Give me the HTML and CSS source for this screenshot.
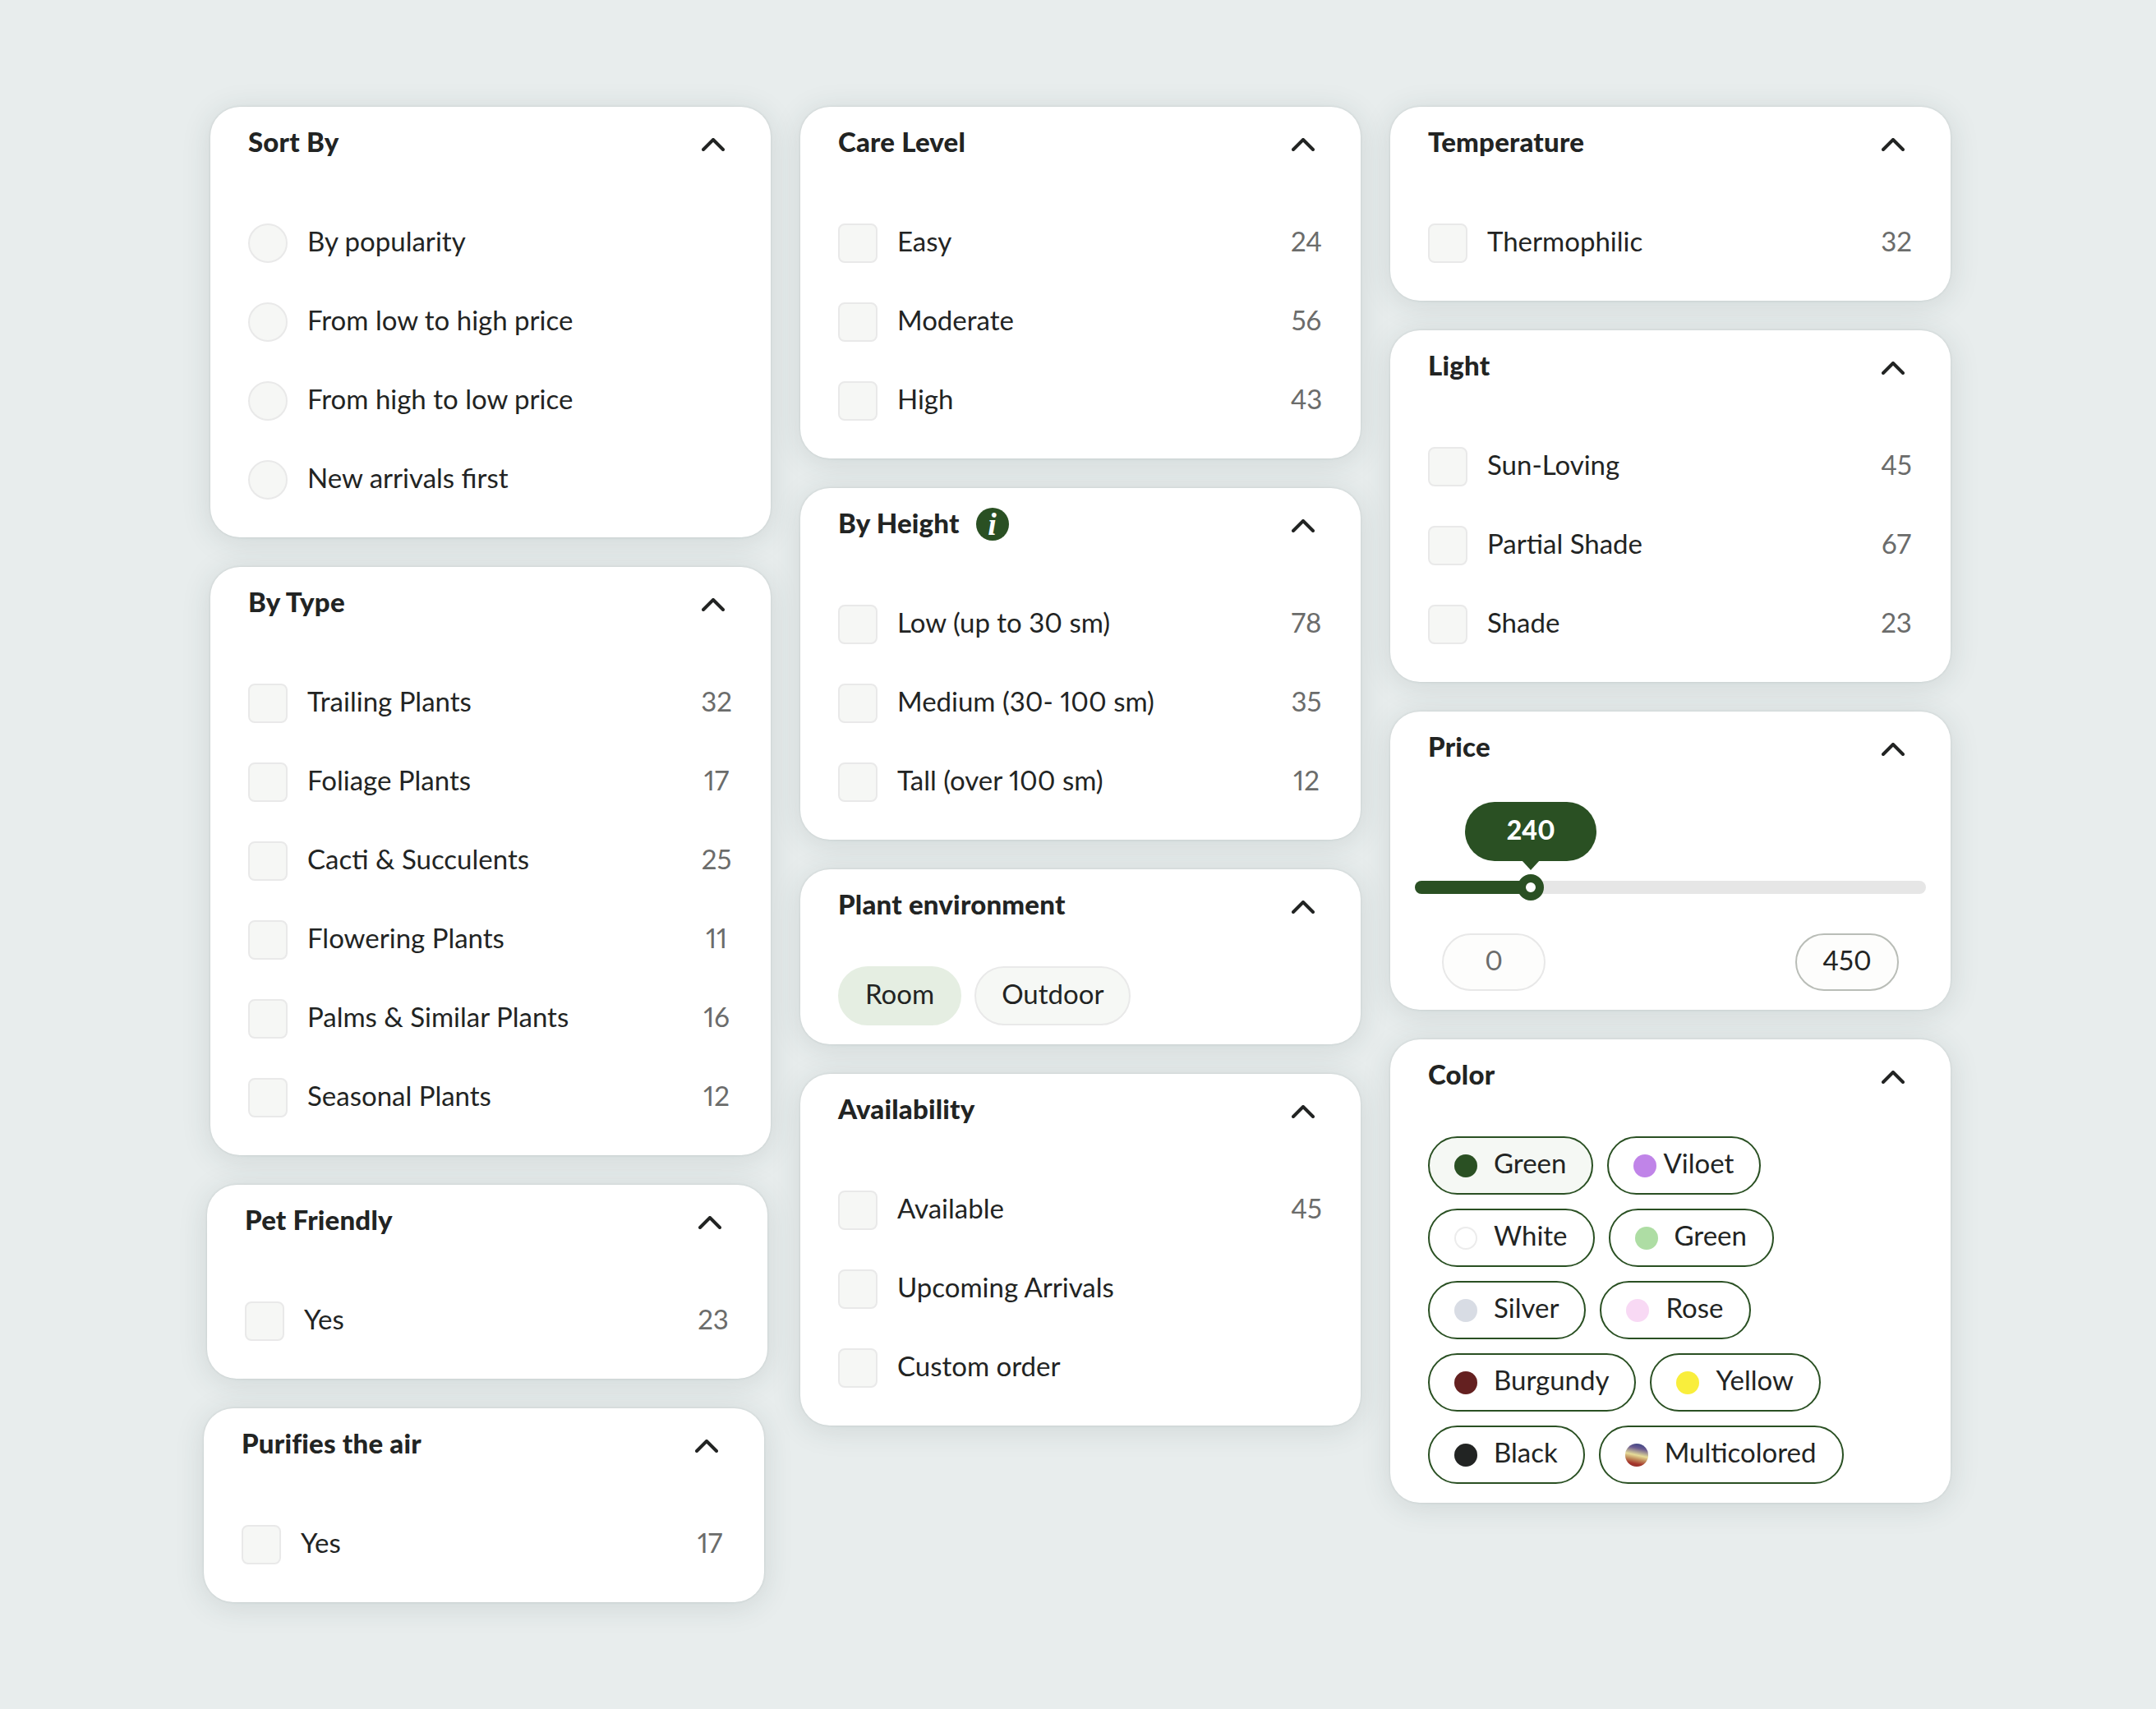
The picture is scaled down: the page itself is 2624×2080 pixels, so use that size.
FILE: index.html
```html
<!DOCTYPE html>
<html lang="en">
<head>
<meta charset="utf-8">
<title>Plant filters</title>
<link rel="stylesheet" href="styles.css">
</head>
<body>
<svg class="defs" width="0" height="0"><symbol id="chev" viewBox="0 0 28 16"><path d="M2 14 14 2l12 12" fill="none" stroke="currentColor" stroke-width="4" stroke-linecap="round" stroke-linejoin="round"/></symbol></svg>
<main class="board">
  <div class="col">
    <section class="card">
      <header class="head"><h2 class="title">Sort By</h2><svg class="chev"><use href="#chev"/></svg></header>
      <ul class="rows">
        <li class="row"><span class="radio"></span><span class="label">By popularity</span></li>
        <li class="row"><span class="radio"></span><span class="label">From low to high price</span></li>
        <li class="row"><span class="radio"></span><span class="label">From high to low price</span></li>
        <li class="row"><span class="radio"></span><span class="label">New arrivals first</span></li>
      </ul>
    </section>
    <section class="card">
      <header class="head"><h2 class="title">By Type</h2><svg class="chev"><use href="#chev"/></svg></header>
      <ul class="rows">
        <li class="row"><span class="box"></span><span class="label">Trailing Plants</span><span class="count">32</span></li>
        <li class="row"><span class="box"></span><span class="label">Foliage Plants</span><span class="count">17</span></li>
        <li class="row"><span class="box"></span><span class="label">Cacti &amp; Succulents</span><span class="count">25</span></li>
        <li class="row"><span class="box"></span><span class="label">Flowering Plants</span><span class="count">11</span></li>
        <li class="row"><span class="box"></span><span class="label">Palms &amp; Similar Plants</span><span class="count">16</span></li>
        <li class="row"><span class="box"></span><span class="label">Seasonal Plants</span><span class="count">12</span></li>
      </ul>
    </section>
    <section class="card shift-1">
      <header class="head"><h2 class="title">Pet Friendly</h2><svg class="chev"><use href="#chev"/></svg></header>
      <ul class="rows">
        <li class="row"><span class="box"></span><span class="label">Yes</span><span class="count">23</span></li>
      </ul>
    </section>
    <section class="card shift-2">
      <header class="head"><h2 class="title">Purifies the air</h2><svg class="chev"><use href="#chev"/></svg></header>
      <ul class="rows">
        <li class="row"><span class="box"></span><span class="label">Yes</span><span class="count">17</span></li>
      </ul>
    </section>
  </div>
  <div class="col">
    <section class="card">
      <header class="head"><h2 class="title">Care Level</h2><svg class="chev"><use href="#chev"/></svg></header>
      <ul class="rows">
        <li class="row"><span class="box"></span><span class="label">Easy</span><span class="count">24</span></li>
        <li class="row"><span class="box"></span><span class="label">Moderate</span><span class="count">56</span></li>
        <li class="row"><span class="box"></span><span class="label">High</span><span class="count">43</span></li>
      </ul>
    </section>
    <section class="card">
      <header class="head"><h2 class="title">By Height<span class="info">i</span></h2><svg class="chev"><use href="#chev"/></svg></header>
      <ul class="rows">
        <li class="row"><span class="box"></span><span class="label">Low (up to 30 sm)</span><span class="count">78</span></li>
        <li class="row"><span class="box"></span><span class="label">Medium (30- 100 sm)</span><span class="count">35</span></li>
        <li class="row"><span class="box"></span><span class="label">Tall (over 100 sm)</span><span class="count">12</span></li>
      </ul>
    </section>
    <section class="card card-pills">
      <header class="head head-tight"><h2 class="title">Plant environment</h2><svg class="chev"><use href="#chev"/></svg></header>
      <div class="tags">
        <span class="tag tag-on">Room</span>
        <span class="tag">Outdoor</span>
      </div>
    </section>
    <section class="card">
      <header class="head"><h2 class="title">Availability</h2><svg class="chev"><use href="#chev"/></svg></header>
      <ul class="rows">
        <li class="row"><span class="box"></span><span class="label">Available</span><span class="count">45</span></li>
        <li class="row"><span class="box"></span><span class="label">Upcoming Arrivals</span></li>
        <li class="row"><span class="box"></span><span class="label">Custom order</span></li>
      </ul>
    </section>
  </div>
  <div class="col">
    <section class="card">
      <header class="head"><h2 class="title">Temperature</h2><svg class="chev"><use href="#chev"/></svg></header>
      <ul class="rows">
        <li class="row"><span class="box"></span><span class="label">Thermophilic</span><span class="count">32</span></li>
      </ul>
    </section>
    <section class="card">
      <header class="head"><h2 class="title">Light</h2><svg class="chev"><use href="#chev"/></svg></header>
      <ul class="rows">
        <li class="row"><span class="box"></span><span class="label">Sun-Loving</span><span class="count">45</span></li>
        <li class="row"><span class="box"></span><span class="label">Partial Shade</span><span class="count">67</span></li>
        <li class="row"><span class="box"></span><span class="label">Shade</span><span class="count">23</span></li>
      </ul>
    </section>
    <section class="card card-pills">
      <header class="head head-price"><h2 class="title">Price</h2><svg class="chev"><use href="#chev"/></svg></header>
      <div class="slider">
        <div class="track">
          <div class="fill" style="width:22.7%">
            <span class="bubble">240</span>
            <span class="thumb"></span>
          </div>
        </div>
        <div class="ends">
          <span class="end end-min">0</span>
          <span class="end end-max">450</span>
        </div>
      </div>
    </section>
    <section class="card card-pills">
      <header class="head head-tight"><h2 class="title">Color</h2><svg class="chev"><use href="#chev"/></svg></header>
      <div class="swatches">
        <span class="swatch swatch-on"><i class="dot c-green"></i>Green</span>
        <span class="swatch swatch-tight"><i class="dot c-violet"></i>Viloet</span>
        <span class="swatch"><i class="dot c-white"></i>White</span>
        <span class="swatch"><i class="dot c-lime"></i>Green</span>
        <span class="swatch"><i class="dot c-silver"></i>Silver</span>
        <span class="swatch"><i class="dot c-rose"></i>Rose</span>
        <span class="swatch"><i class="dot c-burgundy"></i>Burgundy</span>
        <span class="swatch"><i class="dot c-yellow"></i>Yellow</span>
        <span class="swatch"><i class="dot c-black"></i>Black</span>
        <span class="swatch"><i class="dot c-multi"></i>Multicolored</span>
      </div>
    </section>
  </div>
</main>
</body>
</html>
```
FILE: styles.css
```css
* { box-sizing: border-box; }
html, body { margin: 0; padding: 0; }
body {
  min-height: 2080px;
  background: #e8eded;
  color: #222423;
  font-family: "Lato", "Liberation Sans", sans-serif;
  font-size: 33px;
  font-variant-numeric: proportional-nums;
}
.defs { position: absolute; }
.board {
  display: flex;
  align-items: flex-start;
  gap: 36px;
  padding: 130px 0 0 256px;
}
.col {
  display: flex;
  flex-direction: column;
  gap: 36px;
  width: 682px;
}
.card {
  width: 682px;
  padding: 0 46px 46px;
  background: #fff;
  border-radius: 36px;
  box-shadow: 0 0 3px rgba(40, 60, 60, .14), 0 5px 36px rgba(40, 60, 60, .13);
}
.shift-1 { margin-left: -4px; }
.shift-2 { margin-left: -8px; }
.card-pills { padding-bottom: 23px; }
.head {
  display: flex;
  align-items: center;
  justify-content: space-between;
  height: 86px;
  margin-bottom: 56px;
  padding-right: 10px;
}
.head-tight { margin-bottom: 32px; }
.head-price { margin-bottom: 24px; }
.title {
  display: flex;
  align-items: center;
  margin: -3px 0 0;
  font-size: 33px;
  font-weight: 900;
  line-height: 42px;
  letter-spacing: .2px;
}
.chev {
  width: 28px;
  height: 16px;
  margin-top: 5px;
  color: #222423;
}
.info {
  display: flex;
  align-items: center;
  justify-content: center;
  width: 40px;
  height: 40px;
  margin: 5px 0 0 20px;
  border-radius: 50%;
  background: #2a5023;
  color: #fff;
  font-family: "Liberation Serif", serif;
  font-style: italic;
  font-weight: 700;
  font-size: 38px;
}
.rows {
  display: flex;
  flex-direction: column;
  gap: 48px;
  margin: 0;
  padding: 0;
  list-style: none;
}
.row {
  display: flex;
  align-items: center;
  height: 48px;
  line-height: 44px;
}
.box, .radio {
  flex: none;
  width: 48px;
  height: 48px;
  margin-right: 24px;
  background: #f6f7f5;
  border: 2px solid #e9e9e9;
  border-radius: 8px;
}
.radio { border-radius: 50%; }
.label { flex: 1; margin-top: -6px; }
.count {
  flex: none;
  width: 40px;
  margin-top: -6px;
  text-align: center;
  color: #6b6c6b;
}
.tags {
  display: flex;
  gap: 16px;
}
.tag {
  display: flex;
  align-items: center;
  height: 72px;
  padding: 0 31px 6px;
  border-radius: 36px;
  background: #f6f8f5;
  border: 2px solid #e9e9e9;
}
.tag-on {
  background: #e5eee2;
  border-color: #e5eee2;
}
.slider {
  margin: 0 -16px;
  padding-top: 96px;
}
.track {
  height: 16px;
  border-radius: 8px;
  background: #e6e6e6;
}
.fill {
  position: relative;
  height: 16px;
  border-radius: 8px 0 0 8px;
  background: #2a5023;
}
.bubble {
  position: absolute;
  left: 100%;
  top: -96px;
  display: flex;
  align-items: center;
  justify-content: center;
  width: 160px;
  height: 72px;
  padding-bottom: 6px;
  border-radius: 36px;
  transform: translateX(-50%);
  background: #2a5023;
  color: #fff;
  font-size: 32px;
  font-weight: 900;
}
.bubble::after {
  content: "";
  position: absolute;
  left: 50%;
  top: 71px;
  margin-left: -11px;
  border: solid transparent;
  border-width: 12px 11px 0;
  border-top-color: #2a5023;
}
.thumb {
  position: absolute;
  left: 100%;
  top: 50%;
  width: 32px;
  height: 32px;
  border: 10px solid #2a5023;
  border-radius: 50%;
  background: #fff;
  transform: translate(-50%, -50%);
}
.ends {
  display: flex;
  justify-content: space-between;
  margin-top: 48px;
  padding: 0 33px;
}
.end {
  display: flex;
  align-items: center;
  justify-content: center;
  width: 126px;
  height: 70px;
  padding-bottom: 6px;
  border-radius: 35px;
  background: #fdfdfc;
}
.end-min { border: 2px solid #e8e8e8; color: #6b6c6b; }
.end-max { border: 2px solid #b9bdb7; }
.swatches {
  display: flex;
  flex-wrap: wrap;
  gap: 17px;
}
.swatch {
  display: flex;
  align-items: center;
  gap: 20px;
  height: 71px;
  padding: 0 31px 7px 30px;
  border: 2px solid #2a5023;
  border-radius: 36px;
}
.swatch-on { background: #f5f8f4; }
.swatch-tight { gap: 8px; }
.dot {
  flex: none;
  width: 28px;
  height: 28px;
  margin-top: 7px;
  border-radius: 50%;
}
.c-green { background: #2a5023; }
.c-violet { background: #c084e8; }
.c-white { background: #fff; border: 2px solid #ececec; }
.c-lime { background: #aedda4; }
.c-silver { background: #d8dce4; }
.c-rose { background: #f8d9f4; }
.c-burgundy { background: #642020; }
.c-yellow { background: #f9ee3c; }
.c-black { background: #222423; }
.c-multi { background: linear-gradient(192deg, #2c3c80 0%, #6a5a90 24%, #e6dc98 50%, #c08a5a 66%, #a5362c 82%, #8a2a2a 100%); }
```
